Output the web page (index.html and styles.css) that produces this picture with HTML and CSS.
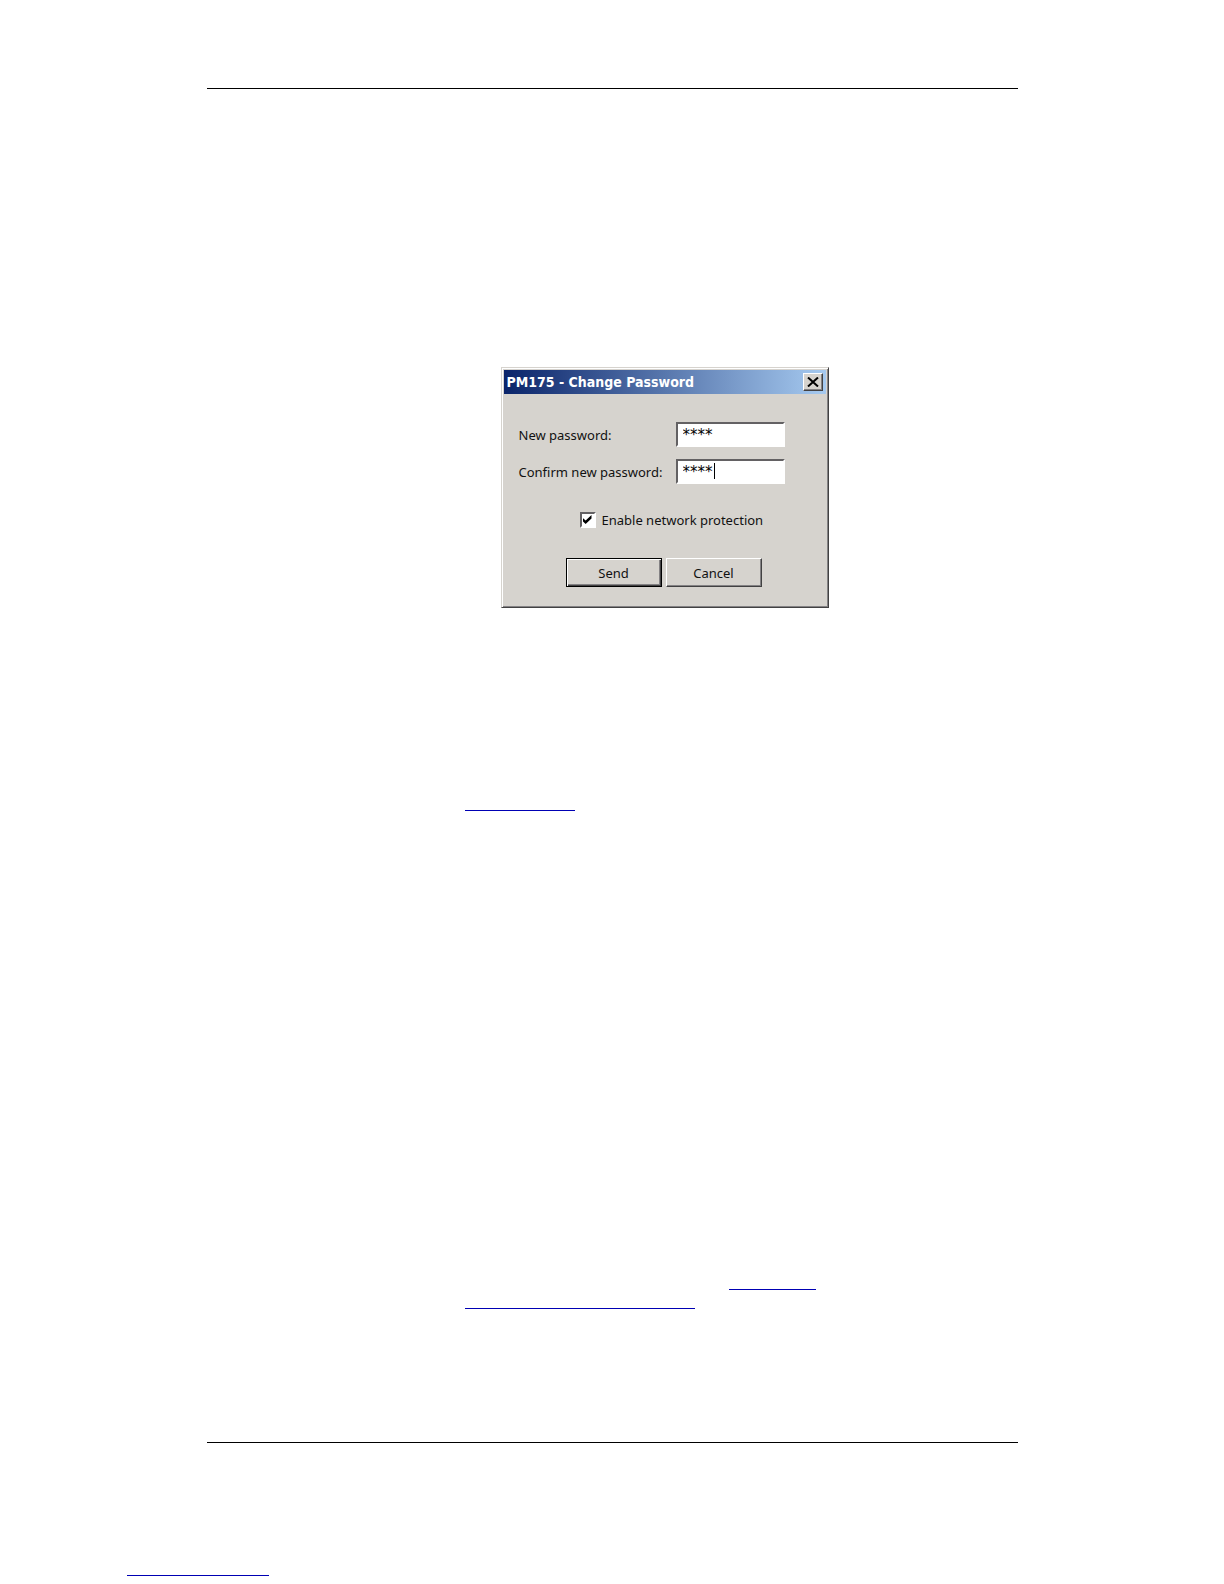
FILE: index.html
```html
<!DOCTYPE html>
<html lang="en">
<head>
    <meta charset="UTF-8">
    <meta name="viewport" content="width=device-width, initial-scale=1.0">
    <title>PM175 - Change Password</title>
    <link rel="stylesheet" href="styles.css">
</head>
<body>

<div class="page">
    <hr class="rule">

    <main class="content">
        <form class="dialog" id="password-form">
            <div class="title-bar">
                <h1>PM175 - Change Password</h1>
                <button type="button" class="close" aria-label="Close">
                    <svg width="12" height="10" viewBox="0 0 12 10"><path d="M1 0.5 L11 9.5 M11 0.5 L1 9.5" stroke="#000" stroke-width="2" fill="none"/></svg>
                </button>
            </div>

            <div class="fields">
                <label for="new-password">New password:</label>
                <div class="field">
                    <input type="text" id="new-password" value="****" autocomplete="off">
                </div>
                <label for="confirm-password">Confirm new password:</label>
                <div class="field">
                    <input type="text" id="confirm-password" value="****" autocomplete="off">
                    <span class="caret"></span>
                </div>
            </div>

            <div class="option">
                <input type="checkbox" id="protection" checked>
                <label for="protection">Enable network protection</label>
            </div>

            <div class="buttons">
                <button type="submit" class="default">Send</button>
                <button type="button">Cancel</button>
            </div>
        </form>

        <a class="link link-first" href="#first"></a>
        <a class="link link-right" href="#second"></a>
        <a class="link link-wrapped" href="#second"></a>
    </main>

    <hr class="rule">
</div>

<footer class="footer">
    <a class="link link-footer" href="#footer"></a>
</footer>

</body>
</html>
```
FILE: styles.css
```css
body {
    margin: 0;
    background-color: #ffffff;
    color: #111;
    font-family: "Noto Sans", "DejaVu Sans Condensed", sans-serif;
    font-size: 13px;
}

.page {
    max-width: 811px;
    margin: 0 auto;
    padding-top: 88px;
}

.rule {
    height: 1px;
    margin: 0;
    border: none;
    background-color: #000;
}

.content {
    padding: 278px 0 133px 258px;
}

/* Dialog window */
.dialog {
    box-sizing: border-box;
    max-width: 328px;
    margin-left: 36px;
    padding: 2px 2px 20px;
    background-color: #d6d3ce;
    border: 1px solid;
    border-color: #d6d3ce #424142 #424142 #d6d3ce;
    box-shadow: inset 1px 1px #fff, inset -1px -1px #848284;
}

.title-bar {
    display: flex;
    align-items: center;
    justify-content: space-between;
    height: 24px;
    padding: 0 3px;
    background: linear-gradient(to right, #0a246a, #a6caf0);
}

.title-bar h1 {
    margin: 0;
    color: #fff;
    font-family: "DejaVu Sans Condensed", "DejaVu Sans", sans-serif;
    font-size: 14px;
    font-weight: bold;
}

button {
    padding: 0;
    background-color: #d6d3ce;
    border: 1px solid;
    border-color: #fff #424142 #424142 #fff;
    box-shadow: inset -1px -1px #848284;
    color: #111;
    font-family: inherit;
    font-size: 13px;
}

.close {
    display: flex;
    align-items: center;
    justify-content: center;
    width: 20px;
    height: 18px;
}

.fields {
    display: grid;
    grid-template-columns: 157px 109px;
    row-gap: 12px;
    align-items: center;
    margin: 28px 0 0 15px;
}

.field {
    position: relative;
}

.field input {
    display: block;
    box-sizing: border-box;
    width: 100%;
    height: 25px;
    padding: 0 5px;
    border: 2px solid;
    border-color: #636163 #fff #fff #636163;
    border-radius: 0;
    background-color: #fff;
    color: #000;
    font-family: "DejaVu Sans", sans-serif;
    font-size: 15px;
    outline: none;
}

.caret {
    position: absolute;
    top: 4px;
    left: 38px;
    width: 1px;
    height: 16px;
    background-color: #000;
}

.option {
    display: flex;
    align-items: center;
    gap: 6px;
    height: 20px;
    margin: 26px 0 0 76px;
}

.option input {
    appearance: none;
    box-sizing: border-box;
    width: 16px;
    height: 16px;
    margin: 0;
    border: 2px solid;
    border-color: #636163 #fff #fff #636163;
    background-color: #fff;
}

.option input:checked::before {
    content: "";
    display: block;
    width: 9px;
    height: 9px;
    margin: 1px;
    background-color: #000;
    clip-path: polygon(0 30%, 35% 62%, 100% 0, 100% 38%, 35% 100%, 0 68%);
}

.buttons {
    display: flex;
    gap: 4px;
    margin: 28px 0 0 62px;
}

.buttons button {
    width: 96px;
    height: 29px;
}

.buttons .default {
    border-color: #000;
    box-shadow: inset 1px 1px #fff, inset -1px -1px #424142, inset -2px -2px #848284;
}

/* Link underlines */
.link {
    display: block;
    box-sizing: border-box;
    height: 19px;
    border-bottom: 1px solid #0000b4;
}

.link-first {
    width: 110px;
    margin-top: 184px;
}

.link-right {
    width: 87px;
    margin: 460px 0 0 264px;
}

.link-wrapped {
    width: 230px;
}

.footer {
    padding: 114px 0 8px 127px;
}

.link-footer {
    width: 142px;
}
```
